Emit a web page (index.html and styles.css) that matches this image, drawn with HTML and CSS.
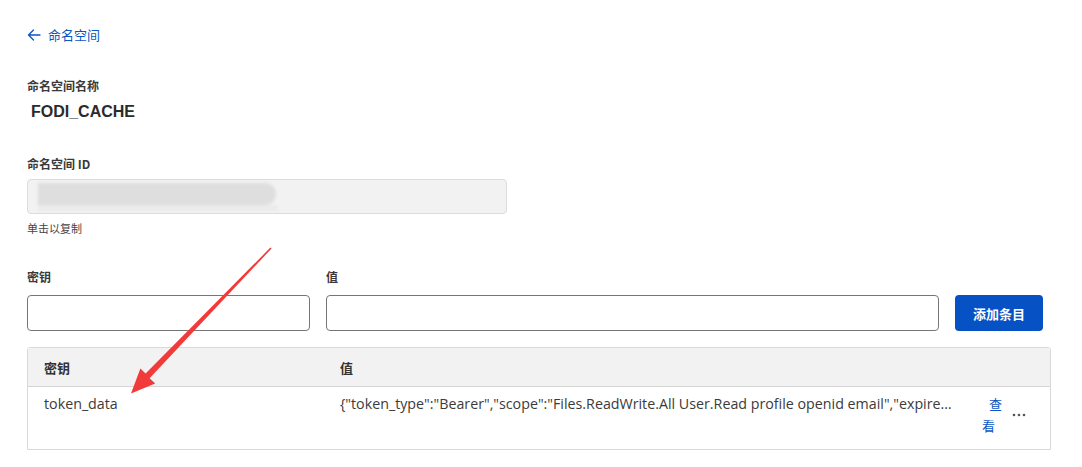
FILE: index.html
```html
<!DOCTYPE html>
<html lang="zh">
<head>
<meta charset="utf-8">
<link rel="stylesheet" href="styles.css">
</head>
<body>
<div class="page">
  <a class="back" href="#"><svg class="arrow-left" width="14" height="12" viewBox="0 0 14 12"><path d="M6.5 1 L1.5 6 L6.5 11 M1.5 6 H13" fill="none" stroke="#0a56c2" stroke-width="1.3" stroke-linecap="round" stroke-linejoin="round"/></svg>命名空间</a>

  <div class="label name-label">命名空间名称</div>
  <div class="ns-name">FODI_CACHE</div>

  <div class="label id-label">命名空间 ID</div>
  <div class="id-box"><div class="blur"><div class="blur-a"></div><div class="blur-b"></div></div></div>
  <div class="hint">单击以复制</div>

  <div class="form">
    <div class="field key-field">
      <div class="label">密钥</div>
      <div class="input"></div>
    </div>
    <div class="field value-field">
      <div class="label">值</div>
      <div class="input"></div>
    </div>
    <button class="add-btn">添加条目</button>
  </div>

  <div class="table">
    <div class="row head">
      <div class="cell c-key">密钥</div>
      <div class="cell c-val">值</div>
      <div class="cell c-act"></div>
    </div>
    <div class="row body-row">
      <div class="cell c-key">token_data</div>
      <div class="cell c-val"><span class="ellip">{"token_type":"Bearer","scope":"Files.ReadWrite.All User.Read profile openid email","expires_in":3599,"ext_expires_in":3599,"access_token":"eyJ0eXAiOiJKV1Qi</span></div>
      <div class="cell c-act">
        <a class="view" href="#">查看</a>
        <svg class="more" width="14" height="4" viewBox="0 0 14 4"><circle cx="2" cy="2" r="1.3" fill="#555"/><circle cx="7" cy="2" r="1.3" fill="#555"/><circle cx="12" cy="2" r="1.3" fill="#555"/></svg>
      </div>
    </div>
  </div>

  <svg class="annot" width="1082" height="467" viewBox="0 0 1082 467">
    <polygon points="271.6,248.4 149.6,378.2 155.2,383.6 131,393.5 140.4,368.4 145.6,373.4 270.4,247.6" fill="#f13a3a"/>
  </svg>
</div>
</body>
</html>
```

FILE: styles.css
```css
* { box-sizing: border-box; }
html, body { margin: 0; padding: 0; background: #fff; }
body {
  font-family: "Noto Sans", "Noto Sans CJK SC", sans-serif;
  color: #333;
}
.page {
  position: relative;
  width: 1082px;
  height: 467px;
  padding: 27px 31px 0 27px;
  overflow: hidden;
}
.back {
  display: flex;
  align-items: center;
  gap: 7px;
  color: #0a56c2;
  text-decoration: none;
  font-family: "Noto Sans CJK SC", sans-serif;
  font-size: 13px;
  line-height: 16px;
  height: 16px;
}
.arrow-left { display: block; }
.label {
  font-family: "Noto Sans CJK SC", sans-serif;
  font-size: 12px;
  line-height: 16px;
  font-weight: 600;
  color: #3a3a3a;
}
.name-label { margin-top: 35px; }
.ns-name {
  margin-top: 8px;
  padding-left: 4px;
  font-family: "Liberation Sans", sans-serif;
  font-size: 16px;
  line-height: 20px;
  font-weight: 700;
  color: #2b2b2b;
}
.id-label { margin-top: 34px; }
.id-box {
  margin-top: 7px;
  width: 480px;
  height: 35px;
  background: #f2f2f2;
  border: 1px solid #dcdcdc;
  border-radius: 4px;
  padding: 3px 0 0 10px;
}
.blur { filter: blur(1.5px); }
.blur-a {
  width: 238px;
  height: 22px;
  background: #dedede;
  border-radius: 0 12px 12px 0;
}
.blur-b {
  width: 240px;
  height: 6px;
  background: #ebebeb;
}
.hint {
  margin-top: 7px;
  font-family: "Noto Sans CJK SC", sans-serif;
  font-size: 11px;
  line-height: 14px;
  color: #444;
}
.form {
  margin-top: 34px;
  display: flex;
  align-items: flex-end;
  gap: 16px;
}
.field { display: flex; flex-direction: column; gap: 10px; }
.key-field { width: 283px; }
.value-field { width: 613px; }
.input {
  height: 36px;
  border: 1px solid #767676;
  border-radius: 4px;
  background: #fff;
}
.add-btn {
  width: 88px;
  height: 36px;
  border: 0;
  border-radius: 4px;
  background: #0651c3;
  color: #fff;
  font-family: "Noto Sans CJK SC", sans-serif;
  font-size: 13px;
  font-weight: 600;
  padding: 0;
}
.table {
  margin-top: 16px;
  width: 1024px;
  border: 1px solid #d9d9d9;
  border-radius: 3px 3px 0 0;
}
.row { display: flex; }
.head {
  background: #f2f2f2;
  height: 39px;
  align-items: center;
  border-bottom: 1px solid #d5d5d5;
  font-family: "Noto Sans CJK SC", sans-serif;
  font-size: 13px;
  font-weight: 600;
  color: #333;
}
.cell { padding-left: 16px; }
.c-key { width: 296px; }
.c-val { width: 658px; }
.c-act { flex: 1; padding-left: 0; }
.body-row {
  height: 62px;
  padding-top: 6px;
  font-size: 14.25px;
  line-height: 22px;
  color: #3b3b3b;
  font-family: "Open Sans", "Noto Sans CJK SC", sans-serif;
}
.body-row .c-val { padding-right: 26px; }
.ellip {
  display: block;
  white-space: nowrap;
  overflow: hidden;
  text-overflow: ellipsis;
}
.body-row .c-act {
  display: flex;
  align-items: flex-start;
  gap: 9px;
  padding-left: 0;
}
.view {
  display: block;
  width: 21px;
  text-indent: 7px;
  color: #0a56c2;
  text-decoration: none;
  font-family: "Noto Sans CJK SC", sans-serif;
  font-size: 13px;
  line-height: 22px;
}
.more { margin-top: 20px; }
.annot { position: absolute; left: 0; top: 0; pointer-events: none; }
```
